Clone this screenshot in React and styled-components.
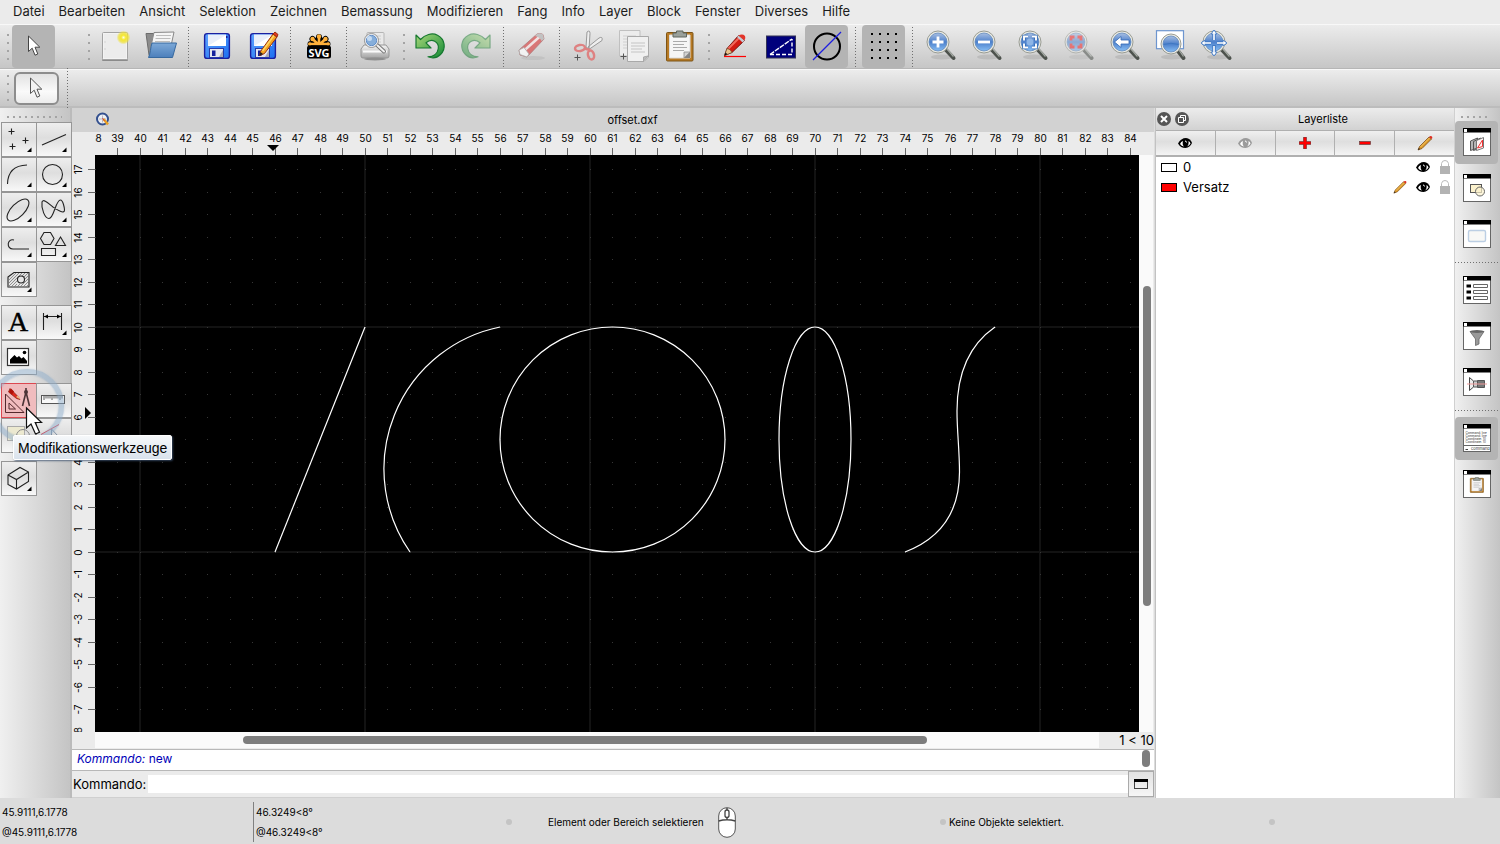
import React from "react"
import styled, { createGlobalStyle } from "styled-components"

const GlobalStyle = createGlobalStyle`
  * { box-sizing: border-box; }
  body {
    margin: 0;
    background: #ebebeb;
    color: #000000;
    font-family: Inter, "Liberation Sans", sans-serif;
    font-size: 13px;
  }
  button, input { font: inherit; color: inherit; }
  svg { display: block; }
`

// STYLED COMPONENTS
const Page = styled.div`
  display: flex;
  flex-direction: column;
  min-height: 100vh;
  overflow: hidden;
`

const MenuBar = styled.nav`
  display: flex;
  align-items: center;
  gap: 14px;
  height: 24px;
  padding: 0 13px 2px;
  background: #ebebeb;
`

const MenuItem = styled.button`
  padding: 0;
  border: 0;
  background: none;
  color: #1c1c1c;
  line-height: 22px;
  white-space: nowrap;
`

const Toolbar = styled.div`
  display: flex;
  align-items: center;
  gap: 3px;
  height: 45px;
  padding-left: 3px;
  background: linear-gradient(#ececec, #c6c6c6);
  border-top: 1px solid #f8f8f8;
  border-bottom: 1px solid #b6b6b6;
`

const OptionsBar = styled(Toolbar)`
  height: 39px;
  gap: 5px;
  border-bottom: 2px solid #bcbcbc;
`

const Handle = styled.div`
  width: 6px;
  height: 26px;
  flex: none;
  margin-left: ${({ $space }) => $space || "0"};
  background: repeating-linear-gradient(#a4a4a4 0 2px, transparent 2px 8px) right / 2px 100% no-repeat;
`

const HandleAcross = styled.div`
  height: 2px;
  margin: ${({ $margin }) => $margin};
  background: repeating-linear-gradient(90deg, #a4a4a4 0 2px, transparent 2px 6px);
`

const Separator = styled.div`
  width: ${({ $wide }) => ($wide ? "8px" : "7px")};
  height: 40px;
  flex: none;
  background: repeating-linear-gradient(#6f6f6f 0 1px, transparent 1px 3px) center / 1px 100% no-repeat;
`

const SeparatorAcross = styled.div`
  width: 43px;
  height: 7px;
  flex: none;
  background: repeating-linear-gradient(90deg, #6f6f6f 0 1px, transparent 1px 3px) center / 100% 1px no-repeat;
`

const ToolButton = styled.button`
  display: flex;
  align-items: center;
  justify-content: center;
  flex: none;
  width: 43px;
  height: 43px;
  padding: 0 0 2px;
  border: 0;
  border-radius: 4px;
  background: ${({ $active }) => ($active ? "#b4b4b4" : "none")};
`

const OptionButton = styled(ToolButton)`
  width: 45px;
  height: 33px;
  padding: 0 2px 0 0;
  border: 2px solid #8d8d8d;
  border-radius: 6px;
  background: linear-gradient(#e2e2e2, #fafafa 60%, #ececec);
`

const Main = styled.div`
  display: flex;
  flex: 1;
  background: #ebebeb;
`

const Palette = styled.aside`
  width: 72px;
  flex: none;
  background: linear-gradient(90deg, #f0f0f0, #c4c4c4);
  border-right: 2px solid #bbbbbb;
`

const PaletteGroup = styled.div`
  display: grid;
  grid-template-columns: 35px 35px;
  grid-auto-rows: 35px;
  margin: 0 0 8px 1px;
`

const PaletteCell = styled.div`
  position: relative;
`

const PaletteButton = styled.button`
  display: block;
  width: 36px;
  height: 35px;
  padding: 0;
  border: 1px solid ${({ $hot }) => ($hot ? "#dc4850" : "#969696")};
  background: ${({ $hot }) => ($hot ? "#f0bcbe" : "linear-gradient(#eeeeee, #dedede 45%, #f8f8f8)")};
`

const ClickRing = styled.div`
  position: absolute;
  z-index: 2;
  top: -14px;
  left: -11px;
  width: 74px;
  height: 74px;
  border: 5px solid rgba(140, 172, 202, 0.5);
  border-radius: 50%;
  box-shadow: inset 0 0 2px rgba(120, 155, 190, 0.7), 0 0 2px rgba(140, 172, 202, 0.6);
  pointer-events: none;
`

const Pointer = styled.svg`
  position: absolute;
  z-index: 4;
  top: 23px;
  left: 24px;
  pointer-events: none;
`

const Tooltip = styled.div`
  position: absolute;
  z-index: 3;
  top: 52px;
  left: 12px;
  height: 25px;
  padding: 0 4px;
  border: 1px solid #ffffff;
  border-radius: 2px;
  background: linear-gradient(#f6f8fa, #d9e2ec);
  box-shadow: 1px 1px 2px rgba(60, 80, 110, 0.8);
  font-family: "Liberation Sans", Arial, sans-serif;
  font-size: 14px;
  line-height: 24px;
  white-space: nowrap;
`

const Center = styled.main`
  display: flex;
  flex-direction: column;
  flex: 1;
  min-width: 0;
  border-right: 1px solid #dcdcdc;
`

const DocumentTab = styled.header`
  display: grid;
  grid-template-columns: 16px 1fr;
  align-items: center;
  height: 24px;
  padding-left: 23px;
  background: #d2d2d2;
  font-size: 11px;
  text-align: center;
`

const Drawing = styled.section`
  display: grid;
  flex: 1;
  grid-template-columns: 23px minmax(0, 1fr) 15px;
  grid-template-rows: 23px minmax(400px, 1fr) 16px;
  border-bottom: 1px solid #ebebeb;
`

const Ruler = styled.svg`
  width: 100%;
  height: 100%;
  overflow: hidden;
  font-size: 10px;
`

const Canvas = styled.svg`
  width: 100%;
  height: 100%;
  background: #000000;
`

const VerticalTrack = styled.div`
  display: grid;
  grid-template-rows: 131fr 320fr 126fr;
  padding: 0 2px 0 4px;
  background: #fafafa;
  border-right: 1px solid #ebebeb;
`

const BottomStrip = styled.div`
  display: grid;
  grid-column: 2 / 4;
  grid-template-columns: minmax(0, 1fr) 55px;
  align-items: center;
`

const HorizontalTrack = styled.div`
  display: grid;
  grid-template-columns: 148fr 684fr 172fr;
  padding: 4px 0;
  background: #fafafa;
`

const Thumb = styled.div`
  min-width: 8px;
  min-height: 8px;
  border-radius: 4px;
  background: #7d7d7d;
`

const GridScale = styled.span`
  text-align: right;
  white-space: nowrap;
  line-height: 16px;
`

const History = styled.div`
  display: flex;
  justify-content: space-between;
  height: 22px;
  padding: 0 4px 0 5px;
  border: solid #b8b8b8;
  border-width: 1px 0;
  background: #ffffff;
  color: #0000b8;
  font-size: 12px;
  line-height: 18px;
`

const HistoryThumb = styled(Thumb)`
  height: 17px;
`

const CommandLine = styled.form`
  display: flex;
  align-items: center;
  height: 27px;
  background: #ebebeb;
  border-bottom: 1px solid #d0d0d0;
`

const CommandLabel = styled.label`
  width: 76px;
  padding-left: 1px;
`

const CommandInput = styled.input`
  flex: 1;
  min-width: 0;
  height: 18px;
  padding: 0 4px;
  border: 0;
  outline: 0;
  background: #ffffff;
`

const CommandButton = styled.button`
  display: flex;
  align-items: center;
  justify-content: center;
  width: 26px;
  height: 26px;
  padding: 0;
  border: 1px solid #aaaaaa;
  background: linear-gradient(#e2e2e2, #f6f6f6);
`

const LayerPanel = styled.aside`
  display: flex;
  flex-direction: column;
  width: 300px;
  flex: none;
  background: #ffffff;
  border-left: 1px solid #c2c2c2;
  border-right: 1px solid #d0d0d0;
`

const PanelTitle = styled.header`
  display: grid;
  grid-template-columns: 16px 16px 1fr;
  align-items: center;
  gap: 2px;
  height: 22px;
  background: linear-gradient(#ececec, #d2d2d2);
  font-size: 11px;
  text-align: center;
`

const RoundButton = styled.button`
  width: 16px;
  height: 16px;
  padding: 0;
  border: 0;
  background: none;
`

const PanelActions = styled.div`
  display: grid;
  grid-template-columns: repeat(5, 1fr);
  gap: 1px;
  height: 27px;
  padding: 1px 0 2px;
  background: #b0b0b0;
`

const PanelButton = styled.button`
  display: flex;
  align-items: center;
  justify-content: center;
  padding: 0;
  border: 0;
  background: linear-gradient(#f0f0f0, #dedede 45%, #f4f4f4);
`

const LayerList = styled.ul`
  margin: 0;
  padding: 0;
  list-style: none;
`

const LayerRow = styled.li`
  display: grid;
  grid-template-columns: 16px 1fr 16px 16px 16px;
  align-items: center;
  gap: 6px;
  height: 20px;
  padding: 0 1px 0 5px;
`

const Swatch = styled.span`
  width: 16px;
  height: 9px;
  border: 1px solid #000000;
  background: ${({ $color }) => $color};
`

const Dock = styled.aside`
  display: flex;
  flex-direction: column;
  gap: 3px;
  width: 45px;
  flex: none;
  background: linear-gradient(90deg, #f0f0f0, #c4c4c4);
`

const StatusBar = styled.footer`
  display: grid;
  grid-template-columns: 253px 253px minmax(0, 434fr) minmax(0, 329fr) minmax(0, 231fr);
  height: 46px;
  padding-top: 2px;
  background: #dcdcdc;
  font-size: 10px;
`

const Coordinates = styled.div`
  display: grid;
  grid-template-rows: 20px 20px;
  align-items: center;
  align-self: center;
  height: 40px;
  padding-left: 2px;
  border-left: ${({ $line }) => ($line ? "1px solid #808080" : "0")};
`

const StatusItem = styled.div`
  display: flex;
  align-items: center;
  gap: ${({ $gap }) => $gap || "3px"};
`

const Dot = styled.span`
  width: 6px;
  height: 6px;
  margin-right: ${({ $after }) => $after || "0"};
  border-radius: 50%;
  background: #c4c4c4;
`

// TOOLBAR ICONS
const Icon = ({ size = 32, children, ...rest }) => (
  <svg width={size} height={size} viewBox={`0 0 ${size} ${size}`} fill="none" aria-hidden="true" {...rest}>
    {children}
  </svg>
)

const HiddenDefs = styled.svg`
  position: absolute;
`

const Gradients = () => (
  <HiddenDefs width="0" height="0" aria-hidden="true">
    <defs>
      <linearGradient id="lens" x1="0" y1="0" x2="0" y2="1">
        <stop offset="0" stopColor="#a9bfe2" />
        <stop offset=".5" stopColor="#4c80cb" />
        <stop offset="1" stopColor="#86bdf4" />
      </linearGradient>
      <linearGradient id="green" x1="0" y1="0" x2="1" y2="1">
        <stop offset="0" stopColor="#a9d77a" />
        <stop offset="1" stopColor="#128a35" />
      </linearGradient>
      <linearGradient id="folder" x1="0" y1="0" x2="0" y2="1">
        <stop offset="0" stopColor="#7da9d8" />
        <stop offset="1" stopColor="#4c7fbb" />
      </linearGradient>
      <linearGradient id="disk" x1="0" y1="0" x2="1" y2="1">
        <stop offset="0" stopColor="#5fa4ff" />
        <stop offset="1" stopColor="#1c6ef0" />
      </linearGradient>
      <linearGradient id="metal" x1="0" y1="0" x2="0" y2="1">
        <stop offset="0" stopColor="#f5f5f5" />
        <stop offset="1" stopColor="#a5a5a5" />
      </linearGradient>
      <radialGradient id="glow">
        <stop offset="0" stopColor="#fffde0" />
        <stop offset=".35" stopColor="#f4e72e" />
        <stop offset=".7" stopColor="#f0e23a" stopOpacity=".75" />
        <stop offset="1" stopColor="#f0e23a" stopOpacity="0" />
      </radialGradient>
    </defs>
  </HiddenDefs>
)

const ArrowIcon = ({ outline }) => (
  <Icon>
    <path
      d="M10.500 6V21.500L14.200 18.200L17 25.200L19.800 24L17 17.200H21.800Z"
      fill={outline ? "#f4f4f4" : "#ffffff"}
      stroke={outline ? "#555555" : "#444444"}
      strokeWidth="1"
    />
  </Icon>
)

const NewIcon = () => (
  <Icon>
    <rect x="3" y="29" width="26" height="2" rx="1" fill="#8b8b8b" />
    <rect x="3.500" y="2.500" width="25" height="27" rx="1" fill="#f3f3f3" stroke="#a3a3a3" />
    <rect x="5" y="4" width="22" height="24" fill="#ececec" />
    <path d="M5.500 12h1M5.500 19h1" stroke="#bcbcbc" />
    <circle cx="24.500" cy="7.500" r="7" fill="url(#glow)" />
  </Icon>
)

const OpenIcon = () => (
  <Icon>
    <path d="M1 3.500H9L10 6H25V27H5.500L4 25Z" fill="#8c8c8c" stroke="#6c6c6c" />
    <path d="M9 2.500L29 2L26 16H6Z" fill="#f5f5f5" stroke="#888888" />
    <path d="M11 5.500H26M10.500 8.500H25.500M10 11.500H25" stroke="#bcbcbc" />
    <path d="M7 13H31.500L27.500 27.500H3.500C5.500 24 5.500 17 7 13Z" fill="url(#folder)" stroke="#37699f" />
  </Icon>
)

const Disk = () => (
  <>
    <rect x="3.600" y="3.600" width="24.800" height="24.800" rx="2.500" fill="url(#disk)" stroke="#1b20a0" strokeWidth="1.400" />
    <rect x="7" y="4.500" width="18" height="11.500" fill="#e9effa" />
    <path d="M7 16L25 5V16Z" fill="#ffffff" />
    <rect x="8.500" y="18.500" width="14" height="9" fill="#e6e6ee" stroke="#273aa8" />
    <rect x="11" y="20.500" width="3.500" height="5.500" fill="#16219c" />
    <path d="M18 27L22 20V27Z" fill="#a9a9b5" />
    <rect x="25" y="6" width="1.500" height="2" fill="#16219c" />
  </>
)

const SaveIcon = () => <Icon><Disk /></Icon>

const SaveAsIcon = () => (
  <Icon>
    <Disk />
    <path d="M13.500 21.500L26 4L30 7L17.500 23.500L12.800 25.500Z" fill="#f5a522" stroke="#9a3010" />
    <path d="M15.500 21L27 5.500" stroke="#ffd764" strokeWidth="1.500" />
    <path d="M26 4L28 2L31 4.500L30 7Z" fill="#e23a20" stroke="#9a3010" />
    <path d="M12.500 25.800L13.500 22L16 24Z" fill="#222222" />
  </Icon>
)

const SvgIcon = () => (
  <Icon>
    <g stroke="#000000" strokeWidth="6" strokeLinecap="round">
      <path d="M16 15V7M16 15L9.500 9M16 15L22.500 9M16 14H7.500M16 14H24.500" />
    </g>
    <g stroke="#ffb13b" strokeWidth="2.600" strokeLinecap="round">
      <path d="M16 14V7M15 14L9.500 9M17 14L22.500 9M14 14H7M18 14H25" />
    </g>
    <g fill="#ffb13b">
      <circle cx="16" cy="6.500" r="2.200" />
      <circle cx="9.500" cy="9" r="2.200" />
      <circle cx="22.500" cy="9" r="2.200" />
      <circle cx="6.800" cy="14" r="1.800" />
      <circle cx="25.200" cy="14" r="1.800" />
    </g>
    <rect x="4" y="15.500" width="24" height="13" rx="2.500" fill="#000000" />
    <text x="16" y="26.500" textAnchor="middle" fontSize="11" fontWeight="700" fontFamily="Open Sans, sans-serif" fill="#ffffff">SVG</text>
  </Icon>
)

const PreviewIcon = () => (
  <Icon>
    <rect x="8" y="2.500" width="17" height="16" rx="1" fill="#e9e9e9" stroke="#b5b5b5" />
    <path d="M11 6h11M11 9h11M11 12h11" stroke="#cccccc" />
    <path d="M5 15H27L30 19V26Q30 28 28 28H4Q2 28 2 26V19Z" fill="url(#metal)" stroke="#969696" />
    <path d="M4 21.500H28" stroke="#fafafa" strokeWidth="2" />
    <ellipse cx="16" cy="29" rx="11" ry="1.500" fill="#8e8e8e" />
    <path d="M18 15L25 21.500" stroke="#777777" strokeWidth="4" strokeLinecap="round" />
    <path d="M18 15L25 21.500" stroke="#f1f1f1" strokeWidth="2" strokeLinecap="round" />
    <circle cx="12.500" cy="10.500" r="6" fill="#86aeda" stroke="#f5f5f5" strokeWidth="1.500" />
    <circle cx="12.500" cy="10.500" r="7" stroke="#808080" strokeWidth=".8" />
    <circle cx="12.500" cy="10.500" r="5.200" stroke="#4d7fc0" strokeWidth=".8" />
    <circle cx="10.500" cy="8.500" r="2.500" fill="#c5dbf2" />
  </Icon>
)

const UndoIcon = ({ redo }) => (
  <Icon opacity={redo ? ".5" : "1"}>
    <path
      transform={redo ? "translate(32 0) scale(-1 1)" : undefined}
      d="M2 5L6.500 9.500C11 4.500 18 2.500 23.500 5.200C31 9 32.500 18.500 26.500 24.500C23.500 27.500 18.500 28.700 14 26.800C19 26.800 23.500 24 24.300 18.500C25.200 12 18 7.500 12 12.800L17 18H2Z"
      fill="url(#green)"
      stroke="#16782f"
      strokeWidth="1.200"
      strokeLinejoin="round"
    />
  </Icon>
)

const EraserIcon = () => (
  <Icon opacity=".7">
    <ellipse cx="17" cy="28" rx="12" ry="2" fill="#bdbdbd" />
    <path d="M3 20L21 4Q24 2.500 27 4.500L28 9L11 27L4 25Z" fill="#d94c4c" stroke="#a05050" strokeWidth=".8" />
    <path d="M6.500 22L25 5.500" stroke="#f8e5e5" strokeWidth="2.500" />
    <path d="M3 20L8 17.500L13 24L11 27L4 24.500Z" fill="#ffffff" stroke="#9b9b9b" strokeWidth=".8" />
    <path d="M21 4Q24 2.500 27 4.500L28 9L25.500 11Q24 7 19 6Z" fill="#b5b5b5" />
  </Icon>
)

const Plus = ({ x, y }) => <path d={`M${x - 3} ${y}h6M${x} ${y - 3}v6`} stroke="#555555" />

const CutIcon = () => (
  <Icon>
    <path d="M14 17L15 2Q18 -.5 18 3.500L17 19ZM16 17L27 8Q31 6 30 10.500L17.500 19Z" fill="#eeeeee" stroke="#999999" />
    <ellipse cx="8" cy="18" rx="5" ry="3" transform="rotate(-10 8 18)" stroke="#de8282" strokeWidth="2.500" />
    <ellipse cx="19" cy="25" rx="3" ry="4.500" transform="rotate(-15 19 25)" stroke="#de8282" strokeWidth="2.500" />
    <path d="M12.500 18.500L18 20" stroke="#de8282" strokeWidth="2.500" />
    <Plus x={5.5} y={27.500} />
  </Icon>
)

const CopyIcon = () => (
  <Icon>
    <path d="M1.500 .5H22V26H1.500Z" fill="#ececec" stroke="#c0c0c0" />
    <path d="M5 6h13M5 9h13M5 12h5M5 15h5M5 18h5" stroke="#d0d0d0" />
    <path d="M9.500 6.500H30.500V27L26 31.500H9.500Z" fill="#f0f0f0" stroke="#a9a9a9" />
    <path d="M13 13h14M13 16h14M13 19h11M13 22h14" stroke="#c4c4c4" />
    <path d="M30 26L25.500 31V27Z" fill="#bdbdbd" stroke="#a9a9a9" />
    <Plus x={5.5} y={26.5} />
  </Icon>
)

const PasteIcon = ({ size = 32 }) => (
  <svg width={size} height={size} viewBox="0 0 32 32" fill="none" aria-hidden="true">
    <rect x="2.500" y="2.500" width="26.500" height="28.500" rx="1" fill="#b87a24" stroke="#7d5416" />
    <path d="M5.500 5H26V28H5.500Z" fill="#f6f6f6" stroke="#dddddd" />
    <path d="M9 11.500h14M9 14.500h11M9 17.500h14M9 20.500h11" stroke="#ababab" />
    <path d="M26 22L20 28H26Z" fill="#858585" />
    <path d="M20 28V22H26Z" fill="#d3d3d3" stroke="#8d8d8d" strokeWidth=".8" />
    <path d="M9 7V3H12.500V1H19V3H22.500V7Z" fill="#9aa09a" stroke="#60665f" />
  </svg>
)

const PencilIcon = () => (
  <Icon>
    <path d="M5.500 25.500L8 18.500L19.500 5.500L25.500 10.500L13 22.500Z" fill="#d21b12" stroke="#5c0905" strokeWidth=".8" />
    <path d="M9.500 18.500L21 7" stroke="#f0685b" strokeWidth="2" />
    <path d="M18 7L19.500 5.500L25.500 10.500L23.500 12.500Z" fill="#c6cbd4" />
    <path d="M19.500 5.500Q23.500 3.500 26 6Q27 8.500 25.500 10.500Z" fill="#e3352a" />
    <path d="M5.500 25.500L8 18.500Q11.500 19 13 22.500Z" fill="#e9c48d" stroke="#664427" strokeWidth=".6" />
    <path d="M5.500 25.500L6.500 22.500L8.500 24.200Z" fill="#111111" />
    <path d="M5 26.500H27" stroke="#ff0000" strokeWidth="1.200" />
  </Icon>
)

const PlaneIcon = () => (
  <Icon>
    <rect x="1.500" y="6" width="29" height="22" fill="#00007c" stroke="#333355" />
    <path d="M5 24.500L27 9" stroke="#ffffff" strokeWidth="1.400" strokeDasharray="5 1" />
    <path d="M5 24.500H27V9" stroke="#ffffff" strokeWidth="1.400" strokeDasharray="4 2" />
  </Icon>
)

const DiameterIcon = () => (
  <Icon>
    <circle cx="16" cy="16.500" r="13" stroke="#000000" strokeWidth="2" />
    <path d="M2 30L30 2" stroke="#1d1de0" strokeWidth="1.300" />
  </Icon>
)

const GridIcon = () => (
  <Icon>
    {[4, 12, 20, 28].map((y) =>
      [4, 12, 20, 28].map((x) => <rect key={`${x}-${y}`} x={x - 1} y={y - 1} width="2" height="2" fill="#000000" />)
    )}
  </Icon>
)

const Glass = ({ x = 13, y = 12, r = 10 }) => (
  <>
    <ellipse cx="17" cy="27" rx="11" ry="2.500" fill="#999999" opacity=".35" />
    <path d={`M${x + r - 2} ${y + r - 2}L28.500 28`} stroke="#4d524d" strokeWidth="4" strokeLinecap="round" />
    <path d={`M${x + r - 1} ${y + r - 3}L28.500 26.500`} stroke="#a5aaa4" strokeWidth="1.300" />
    <circle cx={x} cy={y} r={r + 1} fill="#ededE5" stroke="#989b93" strokeWidth="1" />
    <circle cx={x} cy={y} r={r - 1} fill="url(#lens)" stroke="#6088bd" strokeWidth=".8" />
  </>
)

const zoomMarks = {
  in: <path d="M13 6.500V17.500M7.500 12H18.500" stroke="#ffffff" strokeWidth="2.800" />,
  out: <path d="M7 12H19" stroke="#ffffff" strokeWidth="2.800" />,
  auto: (
    <>
      <path d="M7 10.500V6.500H11M15 6.500H19V10.500M19 13.500V17.500H15M11 17.500H7V13.500" stroke="#2c67b5" strokeWidth="3.400" />
      <path d="M7 10.500V6.500H11M15 6.500H19V10.500M19 13.500V17.500H15M11 17.500H7V13.500" stroke="#ffffff" strokeWidth="1.900" />
      <circle cx="13" cy="12" r="3.500" fill="#8db5e6" />
    </>
  ),
  selection: (
    <path d="M8 10.500V7H11.500M14.500 7H18V10.500M18 13.500V17H14.500M11.500 17H8V13.500" stroke="#ef2222" strokeWidth="2.800" />
  ),
  previous: <path d="M5.500 12L12 6.500V10H20V14H12V17.500Z" fill="#ffffff" stroke="#3268b5" strokeWidth=".8" />,
}

const ZoomIcon = ({ mark }) => (
  <Icon opacity={mark === "selection" ? ".55" : "1"}>
    <Glass />
    {zoomMarks[mark]}
  </Icon>
)

const ZoomWindowIcon = () => (
  <Icon>
    <rect x="1.500" y=".7" width="27" height="18" fill="#ffffff" stroke="#6d95cf" strokeWidth="1.200" />
    <Glass x={16} y={14} r={9} />
    <path d="M8.500 14.500Q16 12 23.500 14.500" stroke="#3f78c2" />
  </Icon>
)

const PanIcon = () => (
  <Icon>
    <Glass />
    <g strokeLinejoin="round">
      <path d="M13 1V10M13 15V25M1 13H10M16 13H25" stroke="#4279c4" strokeWidth="3.500" />
      <path d="M13 0L16 4H10ZM13 26L16 22H10ZM0 13L4 10V16ZM26 13L22 10V16Z" fill="#ffffff" stroke="#4279c4" strokeWidth=".9" />
      <path d="M13 3V10M13 16V23M3 13H10M16 13H23" stroke="#ffffff" strokeWidth="1.600" />
    </g>
  </Icon>
)

// PALETTE ICONS, drawn on the inner area of a button
const strokeProps = { stroke: "#222222", strokeWidth: "1.100" }

const paletteIcons = {
  point: <path {...strokeProps} d="M6.500 8.500h6M9.500 5.500v6M20.500 17.500h6M23.500 14.500v6M7.500 23.500h6M10.500 20.500v6" />,
  line: <path {...strokeProps} d="M5 22L29 11.500" />,
  arc: <path {...strokeProps} d="M5.500 26Q6 7.500 25 7" />,
  circle: <circle {...strokeProps} cx="15.500" cy="16.500" r="10" />,
  ellipse: <ellipse {...strokeProps} cx="16" cy="17" rx="14" ry="6.500" transform="rotate(-45 16 17)" />,
  spline: <path {...strokeProps} d="M5 9C4 16 8 25.500 12 25.500C17 25.500 18.500 7 23.500 7C26 7 27.500 15 27.500 17C27.500 22 19 16 16 14C12 11 6.500 5 5 9Z" />,
  polyline: <path {...strokeProps} d="M12 12C5 10 4 21 11 21H27" />,
  shape: <path {...strokeProps} d="M7 4.500H13.500L17 10.500L13.500 16.500H7L3.500 10.500ZM23.500 9L28.500 17.500H18.500ZM4.500 20.500H18.500V27.500H4.500Z" />,
  hatch: (
    <>
      <path {...strokeProps} d="M6 14L12 9.500H27V24H6Z" />
      <path stroke="#777777" strokeWidth=".8" d="M6 18L14 10M6 21L17 10M6 24L20 10M9 24L23 10M12 24L15 21M21 15L26 10M15 24L18 21M22 17L27 12M18 24L27 15M21 24L27 18M24 24L27 21" />
      <circle cx="19" cy="16.500" r="3.500" fill="#e5e5e5" {...strokeProps} />
    </>
  ),
  text: <text x="16" y="25" textAnchor="middle" fontFamily="Liberation Serif, serif" fontSize="28" stroke="#000000" strokeWidth=".4" fill="#000000">A</text>,
  dimension: (
    <>
      <path {...strokeProps} d="M6.500 7V24M24.500 7V24M7 10.500H24" />
      <path d="M7 10.500L11 8.500V12.500ZM24 10.500L20 8.500V12.500Z" fill="#000000" />
    </>
  ),
  image: (
    <>
      <rect x="5.500" y="7.500" width="21" height="17" fill="#ffffff" stroke="#333333" strokeWidth="1.200" />
      <path d="M8 22.500V18.500L12.500 14L15 16.500L17 15L19.500 17.500L21.500 16L25 20V22.500Z" fill="#000000" />
      <circle cx="22.500" cy="11.500" r="1.800" fill="#000000" />
    </>
  ),
  modify: (
    <>
      <path d="M3.500 10V28.500H22ZM7 19V25H13.500Z" stroke="#54282c" />
      <path d="M8 4.500L16 12.500L18 15.500L14.500 14.500L6.500 8Z" fill="#e2281b" stroke="#812015" strokeWidth=".7" />
      <path d="M9 4.500L7 8L10 10.500L12 7.500Z" fill="#b01208" />
      <path d="M14 13L16 11.500L18.500 15.500Z" fill="#e6bb80" />
      <path d="M24 4V8M24 8L20.500 22M24 8L27.500 22" stroke="#4b3437" strokeWidth="1.600" />
      <circle cx="24" cy="8" r="2" fill="#4b3437" />
    </>
  ),
  measure: (
    <>
      <rect x="4.500" y="11.500" width="23" height="8" fill="#f8f8f8" stroke="#555555" />
      <path d="M7 12v4M9 12v2.500M11 12v2.500M13 12v2.500M15 12v4M17 12v2.500M19 12v2.500M21 12v2.500M23 12v4M25 12v2.500" stroke="#333333" strokeWidth=".8" />
    </>
  ),
  block: (
    <>
      <rect x="5.500" y="7.500" width="17" height="14" fill="#ece9d0" stroke="#aaaaaa" />
      <circle cx="21" cy="17" r="6.500" stroke="#888888" />
    </>
  ),
  select: (
    <>
      <path d="M4 15.500L22 5.500" stroke="#e04450" />
      <path d="M14.500 10V20M14.500 10L21 17" stroke="#8090a4" />
    </>
  ),
  solid: <path {...strokeProps} d="M6 13L18 5.500L26.500 10V19.500L14.500 27L6 22.500ZM6 13L14.500 17.500L26.500 10M14.500 17.500V27" />,
}

const paletteGroups = [
  [
    ["point", "Punktwerkzeuge"], ["line", "Linienwerkzeuge"],
    ["arc", "Bogenwerkzeuge"], ["circle", "Kreiswerkzeuge"],
    ["ellipse", "Ellipsenwerkzeuge"], ["spline", "Splinewerkzeuge"],
    ["polyline", "Polylinienwerkzeuge"], ["shape", "Formwerkzeuge"],
    ["hatch", "Schraffur"],
  ],
  [["text", "Text"], ["dimension", "Bemassung"], ["image", "Bild"]],
  [["modify", "Modifikationswerkzeuge"], ["measure", "Messwerkzeuge"], ["block", "Block"], ["select", "Selektion"]],
  [["solid", "3D"]],
]

const noFlyout = ["text", "image", "modify", "measure", "block", "select"]

const PaletteTool = ({ name, label }) => (
  <PaletteCell>
    <PaletteButton $hot={name === "modify"} aria-label={label}>
      <Icon size={34}>
        {paletteIcons[name]}
        {!noFlyout.includes(name) && <path d="M29.500 24.500V29H25Z" fill="#000000" />}
      </Icon>
    </PaletteButton>
    {name === "modify" && (
      <>
        <ClickRing />
        <Tooltip role="tooltip">Modifikationswerkzeuge</Tooltip>
        <Pointer width="18" height="30" viewBox="0 0 18 30">
          <path d="M1.500 2V22L6 18L10.500 28L14.500 26.200L10.200 16.500H16.500Z" fill="#ffffff" stroke="#111111" strokeWidth="1.200" />
        </Pointer>
      </>
    )}
  </PaletteCell>
)

// PANEL ICONS
const EyeIcon = ({ color = "#000000" }) => (
  <Icon size={16}>
    <path d="M1 8.500Q4 3 9 3Q13.500 3.500 15 8Q13 12.500 8.500 13Q3.500 13 1 8.500Z" fill={color} />
    <path d="M3 9Q4 6.500 6 6Q5 10 7 11.500Q4.500 11 3 9ZM13.500 8.500Q13 6.500 11.500 6Q12 10 10 11.500Q12.500 10.500 13.500 8.500Z" fill="#ffffff" />
    <path d="M8 6Q9.500 6 9.500 7.500" stroke="#ffffff" />
  </Icon>
)

const YellowPencil = ({ size = 16 }) => (
  <svg width={size} height={size} viewBox="0 0 16 16" fill="none" aria-hidden="true">
    <path d="M1 15L2.500 11.500L12 2L14.500 4L5 13.500Z" fill="#dc9a2c" stroke="#74430d" strokeWidth=".7" />
    <path d="M3.500 12L12.500 3" stroke="#f3c566" />
    <path d="M12 2Q13.500 .5 15 1.500Q16 3 14.500 4Z" fill="#e02b20" />
    <path d="M1 15L1.800 13L3 14Z" fill="#222222" />
  </svg>
)

const LockIcon = () => (
  <Icon size={16}>
    <path d="M4.500 8V4.500Q5 1.500 8 1.500Q11 1.500 11.500 4.500V8" stroke="#bbbbbb" />
    <rect x="3" y="7" width="10" height="8" fill="#b3b3b3" />
  </Icon>
)

const PlusRed = () => (
  <Icon size={16}>
    <path d="M8 2V14M2 8H14" stroke="#664444" strokeWidth="3.600" />
    <path d="M8 2.500V13.500M2.500 8H13.500" stroke="#ff0000" strokeWidth="2.600" />
  </Icon>
)

const MinusRed = () => (
  <Icon size={16}>
    <rect x="2.500" y="6.500" width="11" height="3" fill="#ff0000" stroke="#664444" strokeWidth=".7" />
  </Icon>
)

const dockIcons = {
  layers: (
    <>
      <path d="M7.500 13L14.500 10V20L7.500 22.500ZM10.500 13.500L17.500 10V20L10.500 22.500Z" fill="#b5b5b5" stroke="#555555" />
      <path d="M13.500 12.500L20.500 9.500V20L13.500 22.500Z" fill="#fff5f5" stroke="#777777" />
      <path d="M14.500 20L19.500 12V18.500Z" stroke="#ef3333" />
    </>
  ),
  blocks: (
    <>
      <rect x="7.500" y="10.500" width="11" height="8" fill="#fcf2cd" stroke="#555555" />
      <circle cx="17" cy="17.500" r="4.500" fill="#fcf2cd" fillOpacity=".7" stroke="#666666" />
    </>
  ),
  views: <rect x="5.500" y="10.500" width="17" height="11" rx="1.500" fill="#f8f8f6" stroke="#bccfe4" strokeWidth="1.400" />,
  properties: (
    <>
      <path d="M3.500 8.500H8V11.500H3.500ZM3.500 14.500H8V17.500H3.500ZM3.500 20.500H8V23.500H3.500Z" fill="#000000" />
      <path d="M10.500 8.500H24.500V11.500H10.500ZM10.500 14.500H24.500V17.500H10.500ZM10.500 20.500H24.500V23.500H10.500Z" stroke="#666666" />
    </>
  ),
  filter: (
    <>
      <path d="M7 9.500L12.500 17V23.500L16 22V17L21 9.500Z" fill="#999999" stroke="#666666" strokeWidth=".8" />
      <ellipse cx="14" cy="9.500" rx="7" ry="1.500" fill="#666666" />
    </>
  ),
  light: (
    <>
      <path d="M6.500 9.500L10.500 13V19L6.500 22.500Z" fill="#eeeeee" stroke="#444444" />
      <path d="M10.500 13H14.500V19H10.500Z" fill="#cccccc" stroke="#555555" />
      <path d="M14.500 12.500H21.500V19.500H14.500Z" fill="#777777" stroke="#555555" />
      <path d="M4 16H24" stroke="#ef9999" />
    </>
  ),
  command: (
    <>
      <g fontSize="3" fill="#333333">
        <text x="2.500" y="9.500">Command: line</text>
        <text x="2.500" y="12.500">Command: line</text>
        <text x="2.500" y="16">Coordinate: 10</text>
        <text x="2.500" y="19">Coordinate: 10</text>
        <text x="8" y="26" fontSize="4">command</text>
      </g>
      <path d="M.500 21.500H27.500" stroke="#666666" />
      <path d="M2.500 25.500H5" stroke="#444444" />
    </>
  ),
}

const DockIcon = ({ name }) => (
  <Icon size={28}>
    <rect x=".5" y=".5" width="27" height="27" fill="#ffffff" stroke="#666666" />
    <rect x="0" y="0" width="28" height="4.500" fill="#000000" />
    <rect x="1" y="1" width="3" height="3" fill="#ffffff" />
    {name === "clipboard" ? <g transform="translate(6 7) scale(.5)"><PasteIcon /></g> : dockIcons[name]}
  </Icon>
)

const dockItems = ["layers", "blocks", "views", null, "properties", "filter", "light", null, "command", "clipboard"]

const menus = [
  "Datei", "Bearbeiten", "Ansicht", "Selektion", "Zeichnen", "Bemassung", "Modifizieren",
  "Fang", "Info", "Layer", "Block", "Fenster", "Diverses", "Hilfe",
]

const tools = [
  ["Neu", <NewIcon />],
  ["Öffnen", <OpenIcon />],
  "separator",
  ["Speichern", <SaveIcon />],
  ["Speichern unter", <SaveAsIcon />],
  "separator",
  ["SVG Export", <SvgIcon />],
  "separator",
  ["Druckvorschau", <PreviewIcon />],
  "handle",
  ["Rückgängig", <UndoIcon />],
  ["Wiederherstellen", <UndoIcon redo />],
  "separator",
  ["Löschen", <EraserIcon />],
  "separator",
  ["Ausschneiden", <CutIcon />],
  ["Kopieren", <CopyIcon />],
  ["Einfügen", <PasteIcon />],
  "handle",
  ["Stift", <PencilIcon />],
  ["Vollbild", <PlaneIcon />],
  ["Entwurfsmodus", <DiameterIcon />, true],
  "wide separator",
  ["Raster", <GridIcon />, true],
  "wide separator",
  ["Vergrössern", <ZoomIcon mark="in" />],
  ["Verkleinern", <ZoomIcon mark="out" />],
  ["Auto Zoom", <ZoomIcon mark="auto" />],
  ["Zoom auf Selektion", <ZoomIcon mark="selection" />],
  ["Vorherige Ansicht", <ZoomIcon mark="previous" />],
  ["Fensterzoom", <ZoomWindowIcon />],
  ["Verschieben", <PanIcon />],
]

// DRAWING
const UNIT = 22.5
const FIRST_X = 38
const ORIGIN_Y = 397

const range = (from, to) => Array.from({ length: to - from + 1 }, (_, i) => from + i)
const toX = (n) => Math.floor((n - FIRST_X) * UNIT) + 0.5
const toY = (n) => Math.floor(ORIGIN_Y - n * UNIT) + 0.5

const HorizontalRuler = ({ xs }) => (
  <Ruler>
    {xs.map((n) => (
      <g key={n}>
        <path d={`M${toX(n)} 16V23`} stroke={n === FIRST_X ? "none" : "#666666"} />
        <text x={toX(n)} y="10" textAnchor="middle">{n}</text>
      </g>
    ))}
    <path d="M172 13H184L178 19Z" fill="#000000" />
  </Ruler>
)

const VerticalRuler = ({ ys }) => (
  <Ruler>
    {ys.map((n) => (
      <g key={n}>
        <path d={`M16 ${toY(n)}H23`} stroke="#666666" />
        <text transform={`translate(10 ${toY(n)}) rotate(-90)`} textAnchor="middle">{n}</text>
      </g>
    ))}
    <path d="M13 252V264L19 258Z" fill="#000000" />
  </Ruler>
)

const DrawingCanvas = ({ xs, ys, svgRef }) => (
  <Canvas ref={svgRef} role="img" aria-label="offset.dxf">
    <g fill="#121212">
      {xs.filter((n) => n % 10 === 0).map((n) => <rect key={n} x={toX(n) - 1.5} y="0" width="2" height="100%" />)}
      {ys.filter((n) => n % 10 === 0).map((n) => <rect key={n} x="0" y={toY(n) - 1.5} width="100%" height="2" />)}
    </g>
    {ys.map((n) => (
      <g key={n} fill="#363636">
        {xs.map((x) => <rect key={x} x={toX(x) - 0.5} y={toY(n) - 0.5} width="1" height="1" />)}
      </g>
    ))}
    <g fill="none" stroke="#ffffff" strokeWidth="1.200">
      <path d="M180 397L270 172" />
      <path d="M405 172A145 145 0 0 0 315 397" />
      <circle cx="517.500" cy="284.500" r="112.500" />
      <ellipse cx="720" cy="284.500" rx="36" ry="112.500" />
      <path d="M900 172C874 190 862 217 862 256C862 277 864.500 295 864.500 317C864.500 359 844 384 810 397" />
    </g>
  </Canvas>
)

const DrawingArea = () => {
  const svgRef = React.useRef(null)
  const [size, setSize] = React.useState({ width: 1044, height: 577 })

  React.useLayoutEffect(() => {
    const measure = () => {
      const box = svgRef.current.getBoundingClientRect()
      setSize({ width: box.width, height: box.height })
    }
    measure()
    window.addEventListener("resize", measure)
    return () => window.removeEventListener("resize", measure)
  }, [])

  const xs = range(FIRST_X, FIRST_X + Math.floor((size.width - 8) / UNIT))
  const ys = range(Math.ceil((ORIGIN_Y - size.height) / UNIT), 17)

  return (
    <Drawing>
      <span />
      <HorizontalRuler xs={xs} />
      <span />
      <VerticalRuler ys={ys} />
      <DrawingCanvas xs={xs} ys={ys} svgRef={svgRef} />
      <VerticalTrack><span /><Thumb /></VerticalTrack>
      <span />
      <BottomStrip>
        <HorizontalTrack><span /><Thumb /></HorizontalTrack>
        <GridScale>1 &lt; 10</GridScale>
      </BottomStrip>
    </Drawing>
  )
}

export default function App() {
  return (
    <Page>
      <GlobalStyle />
      <Gradients />
      <MenuBar>
        {menus.map((menu) => <MenuItem key={menu}>{menu}</MenuItem>)}
      </MenuBar>

      <Toolbar>
        <Handle />
        <ToolButton $active aria-label="Auswahl"><ArrowIcon /></ToolButton>
        <Handle $space="26px" />
        {tools.map((tool, key) => {
          if (tool === "separator") return <Separator key={key} />
          if (tool === "wide separator") return <Separator key={key} $wide />
          if (tool === "handle") return <Handle key={key} />
          return <ToolButton key={key} aria-label={tool[0]} $active={tool[2]}>{tool[1]}</ToolButton>
        })}
      </Toolbar>

      <OptionsBar>
        <Handle />
        <OptionButton aria-label="Zurück"><ArrowIcon outline /></OptionButton>
        <Separator />
      </OptionsBar>

      <Main>
        <Palette>
          <HandleAcross $margin="8px 8px 4px 7px" />
          {paletteGroups.map((group, key) => (
            <PaletteGroup key={key}>
              {group.map(([name, label]) => <PaletteTool key={name} name={name} label={label} />)}
            </PaletteGroup>
          ))}
        </Palette>

        <Center>
          <DocumentTab>
            <Icon size={16}>
              <circle cx="7.500" cy="7" r="5.500" fill="#eef0f4" stroke="#33508f" strokeWidth="2" />
              <path d="M7.500 3.500V10.500M4 7H11" stroke="#b5b5c5" />
              <path d="M8.500 7L13 12.500" stroke="#e9a126" strokeWidth="2.500" />
              <path d="M7.500 6L9.500 9" stroke="#d44b35" />
            </Icon>
            <span>offset.dxf</span>
          </DocumentTab>
          <DrawingArea />
          <History>
            <span><em>Kommando:</em> new</span>
            <HistoryThumb />
          </History>
          <CommandLine onSubmit={(e) => e.preventDefault()}>
            <CommandLabel htmlFor="command">Kommando:</CommandLabel>
            <CommandInput id="command" autoComplete="off" />
            <CommandButton type="button" aria-label="Verlauf">
              <Icon size={16}>
                <rect x="1.500" y="3.500" width="13" height="9" stroke="#444444" />
                <rect x="1" y="3" width="14" height="3" fill="#000000" />
              </Icon>
            </CommandButton>
          </CommandLine>
        </Center>

        <LayerPanel>
          <PanelTitle>
            <RoundButton aria-label="Schliessen">
              <Icon size={16}>
                <circle cx="8" cy="8" r="7" fill="#555555" />
                <path d="M5 5L11 11M11 5L5 11" stroke="#ffffff" strokeWidth="2" />
              </Icon>
            </RoundButton>
            <RoundButton aria-label="Ablösen">
              <Icon size={16}>
                <circle cx="8" cy="8" r="7" fill="#555555" />
                <path d="M6.500 6V4.500H11.500V9.500H10M4.500 6.500H9.500V11.500H4.500Z" stroke="#ffffff" />
              </Icon>
            </RoundButton>
            <span>Layerliste</span>
          </PanelTitle>
          <PanelActions>
            <PanelButton aria-label="Alle Layer anzeigen"><EyeIcon /></PanelButton>
            <PanelButton aria-label="Alle Layer ausblenden"><EyeIcon color="#9b9b9b" /></PanelButton>
            <PanelButton aria-label="Layer hinzufügen"><PlusRed /></PanelButton>
            <PanelButton aria-label="Layer entfernen"><MinusRed /></PanelButton>
            <PanelButton aria-label="Layer bearbeiten"><YellowPencil /></PanelButton>
          </PanelActions>
          <LayerList>
            <LayerRow>
              <Swatch $color="#ffffff" />
              <span>0</span>
              <span />
              <EyeIcon />
              <LockIcon />
            </LayerRow>
            <LayerRow>
              <Swatch $color="#ff0000" />
              <span>Versatz</span>
              <YellowPencil size={14} />
              <EyeIcon />
              <LockIcon />
            </LayerRow>
          </LayerList>
        </LayerPanel>

        <Dock>
          <HandleAcross $margin="8px 10px 0 6px" />
          {dockItems.map((name, key) =>
            name ? (
              <ToolButton key={key} aria-label={name} $active={name === "layers" || name === "command"}>
                <DockIcon name={name} />
              </ToolButton>
            ) : (
              <SeparatorAcross key={key} />
            )
          )}
        </Dock>
      </Main>

      <StatusBar>
        <Coordinates>
          <span>45.9111,6.1778</span>
          <span>@45.9111,6.1778</span>
        </Coordinates>
        <Coordinates $line>
          <span>46.3249&lt;8°</span>
          <span>@46.3249&lt;8°</span>
        </Coordinates>
        <StatusItem $gap="14px">
          <Dot $after="22px" />
          <span>Element oder Bereich selektieren</span>
          <svg width="18" height="31" viewBox="0 0 18 31" fill="none" aria-hidden="true">
            <rect x=".7" y=".7" width="16.600" height="29.600" rx="8.300" fill="#ffffff" stroke="#555555" />
            <path d="M.7 14Q9 11.500 17.300 14M9 1V3M9 10V12.500" stroke="#444444" strokeWidth="1.400" />
            <rect x="7" y="3" width="4" height="7.500" rx="2" stroke="#444444" strokeWidth="1.300" />
          </svg>
        </StatusItem>
        <StatusItem>
          <Dot />
          <span>Keine Objekte selektiert.</span>
        </StatusItem>
        <StatusItem><Dot /></StatusItem>
      </StatusBar>
    </Page>
  )
}
